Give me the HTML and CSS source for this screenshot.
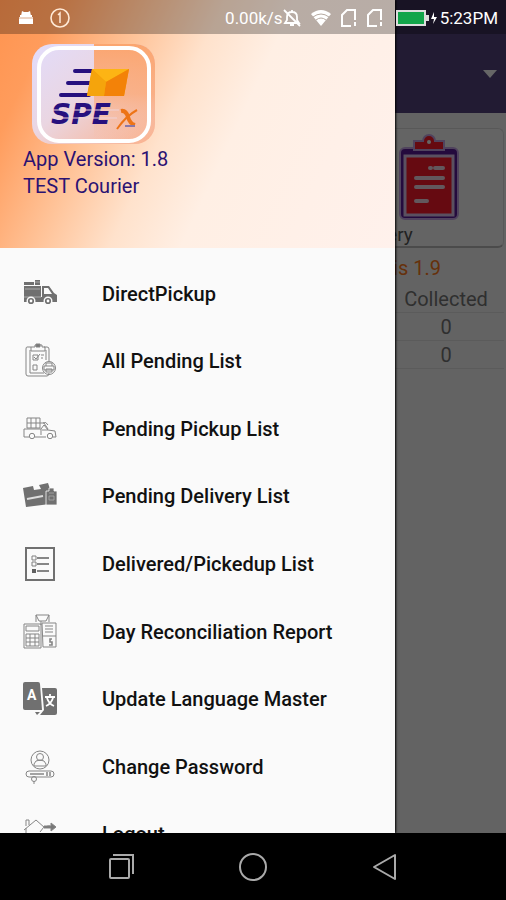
FILE: index.html
```html
<!DOCTYPE html>
<html lang="en">
<head>
  <meta charset="UTF-8" />
  <meta name="viewport" content="width=device-width, initial-scale=1.0" />
  <title>SPEx Courier</title>
  <link rel="stylesheet" href="styles.css">
</head>
<body>
  <div class="screen">
    <!-- Dashboard -->
    <main class="dashboard">
      <header class="toolbar">
        <button class="toolbar-menu" aria-label="More">
          <svg width="14" height="8" viewBox="0 0 14 8"><path d="M0 0h14L7 8z" fill="#fff"/></svg>
        </button>
      </header>
      <section class="cards">
        <div class="card"></div>
        <div class="card">
          <svg class="card-icon" width="64" height="88" viewBox="0 0 64 88">
            <rect x="3" y="15" width="58" height="71" rx="5" fill="#5a1a9a" stroke="#c9a8e8" stroke-width="2"/>
            <rect x="8" y="23" width="48" height="59" fill="#ff1a2b" stroke="#e0c8f0" stroke-width="3"/>
            <path d="M17 8h9a6 6 0 0 1 12 0h9v9H17z" fill="#ff1a2b" stroke="#c9a8e8" stroke-width="2"/>
            <circle cx="32" cy="9" r="2" fill="#fff"/>
            <path d="M33 35h1M38 35h8M19 45h27M19 54h27M19 68h11" stroke="#f4dce8" stroke-width="4" stroke-linecap="round"/>
          </svg>
          <p>Delivery</p>
        </div>
      </section>
      <p class="notice">is 1.9</p>
      <table class="summary">
        <thead>
          <tr><td></td><td></td><td></td><th>Collected</th></tr>
        </thead>
        <tbody>
          <tr><td></td><td></td><td></td><td>0</td></tr>
          <tr><td></td><td></td><td></td><td>0</td></tr>
        </tbody>
      </table>
    </main>

    <div class="scrim"></div>

    <!-- Navigation drawer -->
    <aside class="drawer">
      <div class="drawer-header">
        <svg class="logo" width="126" height="102" viewBox="0 0 126 102">
          <defs>
            <linearGradient id="box" x1="0" y1="0" x2="1" y2="1">
              <stop offset="0" stop-color="#e2dcfb"/>
              <stop offset=".45" stop-color="#ead6e2"/>
              <stop offset="1" stop-color="#fbb08a"/>
            </linearGradient>
            <linearGradient id="boxRight" x1="0" y1="0" x2="0" y2="1">
              <stop offset="0" stop-color="#fba56f"/>
              <stop offset=".5" stop-color="#fbab7b" stop-opacity=".8"/>
              <stop offset="1" stop-color="#f7c3ae" stop-opacity="0"/>
            </linearGradient>
          </defs>
          <rect x="1" y="1" width="123" height="100" rx="20" fill="url(#box)"/>
          <path d="M63 1h41a20 20 0 0 1 20 20v60a20 20 0 0 1-20 20H63z" fill="url(#boxRight)"/>
          <rect x="8" y="5" width="110" height="93" rx="20" fill="none" stroke="#fff" stroke-width="4"/>
          <path d="M44 28h18M37 40h22M30 52h28" stroke="#26107e" stroke-width="4" stroke-linecap="round"/>
          <path d="M61 26h37l-5 27H56z" fill="#f99b05"/>
          <path d="M61 26h37L75 39z" fill="#fdb414"/>
          <path d="M98 26l-5 27H73l2-14z" fill="#f38208"/>
          <path d="M61 26l14 13-2 14H56z" fill="#f5a40c"/>
          <text class="logo-name" x="20" y="81">SPE</text>
          <path d="M22 67h66M20 75h66" stroke="#efd2d6" stroke-width="1"/>
          <path d="M90 68q5-1 7 6t7 8" fill="none" stroke="#ed7417" stroke-width="4"/>
          <path d="M106 67Q95 73 86 86" fill="none" stroke="#ed7417" stroke-width="2"/>
          <path d="M94 83h10" stroke="#8878a8" stroke-width="2"/>
        </svg>
        <p>App Version: 1.8</p>
        <p>TEST Courier</p>
      </div>

      <nav class="menu">
        <a href="#">
          <svg class="icon" viewBox="0 0 36 36">
            <path d="M2 6h10v3H2zM13 4h5v5h-5zM2 10h17v13H2zM20 10h7l5 7 3 2v7H2v-5h18z" fill="#707070"/>
            <path d="M22 12h4l4 6h-8z" fill="#fafafa"/>
            <path d="M3 13h15M2 21h17M13 6h5" stroke="#aaa"/>
            <g fill="#707070" stroke="#fafafa" stroke-width="1.4">
              <circle cx="9" cy="25" r="3.8"/><circle cx="26" cy="25" r="3.8"/>
            </g>
            <circle cx="9" cy="25" r="1.4" fill="#fff"/><circle cx="26" cy="25" r="1.4" fill="#fff"/>
          </svg>
          DirectPickup
        </a>
        <a href="#">
          <svg class="icon line" viewBox="0 0 36 36">
            <path d="M9 4H5q-1 0-1 2v25q0 2 2 2h19q2 0 2-3M27 18V6q0-2-2-2h-3M8 7v23h14M24 7v10M9 4h4V2h7v2h3v4H9z"/>
            <path d="M11 12h5v5h-5zM12 14l2 2 4-5M19 12h3M19 15h2M11 22h4v5h-4z"/>
            <circle cx="27" cy="25" r="6.5"/>
            <path d="M24 23v-3h6v3M22 23h10v4H22zM24 26h6v3h-6z"/>
            <path d="M14 1h4v3h-4z" fill="#777"/>
          </svg>
          All Pending List
        </a>
        <a href="#">
          <svg class="icon line" viewBox="0 0 36 36">
            <path d="M5 7h13v10H5zM5 12h13M9 7v10M14 7v10M18 12h4l4 6M21 12q3-2 5 2"/>
            <path d="M2 18h17v6M19 18l3-4 4 5 7 1 1 6h-3M24 26H13M7 26H2v-8M20 19h6"/>
            <circle cx="10" cy="25" r="2.7"/><circle cx="28" cy="25" r="2.7"/>
          </svg>
          Pending Pickup List
        </a>
        <a href="#">
          <svg class="icon" viewBox="0 0 36 36">
            <path d="M1 10l10-2 1 4 7-1-2-4 9-2 2 6v15L4 29z" fill="#707070"/>
            <path d="M5 21l16-3" stroke="#ddd" stroke-width="2"/>
            <path d="M24 13h3v-3h5v3h3v14H24z" fill="#707070" stroke="#fafafa" stroke-width=".8"/>
            <path d="M27 15h5M27 18h5v4h-5z" fill="none" stroke="#aaa" stroke-width=".8"/>
          </svg>
          Pending Delivery List
        </a>
        <a href="#">
          <svg class="icon" viewBox="0 0 36 36">
            <path d="M4 2h28v32H4z" fill="none" stroke="#707070" stroke-width="2"/>
            <path d="M15 12h12M15 18h12M15 25h12" stroke="#606060" stroke-width="1.7"/>
            <path d="M10 10h4v4h-4zM10 16h4v4h-4z" fill="none" stroke="#808080"/>
            <path d="M10 23h4v4h-4z" fill="#606060"/>
          </svg>
          Delivered/Pickedup List
        </a>
        <a href="#">
          <svg class="icon line" viewBox="0 0 36 36">
            <path d="M14 8V1h13v7M14 1l3 6h7l3-6M19 7v4"/>
            <path d="M2 10h17v24H2zM4 12h13v5H4zM4 20h13v12H4zM4 24h13M4 28h13M8 20v12M13 20v12"/>
            <path d="M20 9h14v24H21zM23 12h8M23 15h8M23 18h8M21 22h13"/>
            <path d="M30 25h-2v3h2v3h-3" stroke-width="1.6"/>
          </svg>
          Day Reconciliation Report
        </a>
        <a href="#">
          <svg class="icon" viewBox="0 0 36 36">
            <path d="M3 1h13q2 0 2 2l2 26H3q-2 0-2-2V3q0-2 2-2zM13 31h5l-3 3zM20 7h13q2 0 2 2v23q0 2-2 2H18l4-5z" fill="#707070"/>
            <text class="icon-letter" x="5" y="19">A</text>
            <path d="M23 16h10M28 13v3M31 17q-2 6-7 8M25 17q2 6 7 8" fill="none" stroke="#fff" stroke-width="1.8"/>
          </svg>
          Update Language Master
        </a>
        <a href="#">
          <svg class="icon line" viewBox="0 0 36 36">
            <circle cx="18" cy="11" r="9"/>
            <circle cx="18" cy="8" r="3.5"/>
            <path d="M12 17v-2q1-4 6-4t6 4v2z"/>
            <rect x="4" y="22" width="28" height="6" rx="3"/>
            <path d="M8 25h14M25 23v4M28 23v4" stroke-width="1.5"/>
            <circle cx="12" cy="30" r="2.5"/><path d="M12 32v3"/>
          </svg>
          Change Password
        </a>
        <a href="#">
          <svg class="icon line" viewBox="0 0 36 36">
            <path d="M2 14L14 4l9 8M4 12v20h18v-5M4 10V4h3v5M18 16q3-6 8-6h2"/>
            <path d="M22 10h7V7l5 4-5 4v-3h-7z" fill="#777"/>
          </svg>
          Logout
        </a>
      </nav>
    </aside>

    <!-- Status bar -->
    <div class="status">
      <div class="status-left">
        <svg width="14" height="14" viewBox="0 0 14 14"><path d="M3 0l2 1h4l2-1 1 5H2zM1 4h12v2h1v7H0V6h1z" fill="#fff"/><path d="M0 7h14" stroke="#d9a888"/></svg>
        <svg width="20" height="20" viewBox="0 0 20 20"><circle cx="10" cy="10" r="9" fill="none" stroke="#ffe9d6" stroke-width="1.6"/><path d="M8 7l2-2v10" fill="none" stroke="#ffe9d6" stroke-width="1.5"/></svg>
      </div>
      <div class="status-right">
        <span>0.00k/s</span>
        <svg width="18" height="18" viewBox="0 0 18 18" fill="none" stroke="#fff" stroke-width="1.8"><path d="M2 14h14l-2-3V8q0-5-5-5T4 8v3zM7 16h4M9 1v2M1 1l16 16"/></svg>
        <svg class="wifi" width="20" height="16" viewBox="0 0 20 16"><path d="M0 4q10-8 20 0L10 16z" fill="#fff"/><path d="M2 7q8-6 16 0M5 10q5-4 10 0" fill="none" stroke="#b7aaa1"/></svg>
        <svg class="sim" width="16" height="18" viewBox="0 0 16 18"><path d="M14 11V1H6L1 6v11h9M14 13v4" fill="none" stroke="#fff" stroke-width="2"/></svg>
        <svg class="sim" width="16" height="18" viewBox="0 0 16 18"><path d="M14 11V1H6L1 6v11h9M14 13v4" fill="none" stroke="#fff" stroke-width="2"/></svg>
        <svg class="battery" width="42" height="16" viewBox="0 0 42 16"><rect x="1" y="1" width="28" height="14" fill="#12a54a" stroke="#ddd" stroke-width="2"/><path d="M30 5h3v6h-3z" fill="#ddd"/><path d="M38 2l-3 7h3l-1 5 4-7h-3z" fill="#fff"/></svg>
        <span>5:23PM</span>
      </div>
    </div>
  </div>

  <!-- System buttons -->
  <footer class="system-nav">
    <button aria-label="Recent apps">
      <svg width="28" height="28" viewBox="0 0 28 28"><rect x="3" y="6" width="19" height="19" rx="1"/><path d="M6 2h20v19"/></svg>
    </button>
    <button aria-label="Home">
      <svg width="28" height="28" viewBox="0 0 28 28"><circle cx="14" cy="14" r="13"/></svg>
    </button>
    <button aria-label="Back">
      <svg width="28" height="28" viewBox="0 0 28 28"><path d="M24 2v24L3 14z" stroke-linejoin="round"/></svg>
    </button>
  </footer>
</body>
</html>
```

FILE: styles.css
```css
* {
  box-sizing: border-box;
}

body {
  font-family: Roboto, sans-serif;
  margin: 0;
  height: 100vh;
  display: flex;
  flex-direction: column;
  background: #000;
}

p {
  margin: 0;
}

button {
  background: none;
  border: none;
  padding: 0;
  cursor: pointer;
}

svg {
  display: block;
  flex-shrink: 0;
}

.screen {
  flex: 1;
  min-height: 0;
  position: relative;
  overflow: hidden;
}

/* Dashboard */
.dashboard {
  height: 100%;
  background: #f7f7f7;
}

.toolbar {
  display: flex;
  justify-content: flex-end;
  align-items: center;
  height: 113px;
  padding: 34px 9px 0 0;
  background: #55457f;
}

.cards {
  display: grid;
  grid-template-columns: 1fr 1fr;
  gap: 4px;
  padding: 15px 2px 0;
}

.card {
  height: 120px;
  border: 1px solid #ddd;
  border-bottom: 2px solid #bbb;
  border-radius: 6px;
  background: #fafafa;
  text-align: center;
  color: #555;
  font-size: 19px;
  line-height: 24px;
}

.card-icon {
  margin: 4px 42px 2px auto;
}

.notice {
  padding: 8px 65px 0 0;
  text-align: right;
  font-size: 20px;
  line-height: 24px;
  color: #ff7a1a;
}

.summary {
  width: 100%;
  margin-top: 5px;
  padding-right: 2px;
  table-layout: fixed;
  border-spacing: 0;
  text-align: center;
  font-size: 20px;
  color: #777;
}

.summary th,
.summary td {
  height: 28px;
  padding: 0;
  font-weight: normal;
  border-bottom: 1px solid #e4e4e4;
}

.summary th:last-child,
.summary td:last-child {
  width: 116px;
}

.scrim {
  position: absolute;
  inset: 0;
  background: rgba(0, 0, 0, 0.6);
}

/* Navigation drawer */
.drawer {
  position: absolute;
  top: 0;
  bottom: 0;
  left: 0;
  width: 78%;
  overflow: hidden;
  background: #fafafa;
  box-shadow: 1px 0 2px #000;
}

.drawer-header {
  height: 248px;
  padding: 43px 23px 0;
  background: linear-gradient(115deg, #ff9450 0%, #ff9c5c 12%, #ffc49a 30%, #ffe2cc 44%, #ffefe4 58%, #fff1ec 100%);
  color: #2b1272;
  font-size: 20px;
  line-height: 27px;
}

.logo {
  margin: 0 0 1px 8px;
}

.logo-name {
  font: italic bold 28px "DejaVu Sans", sans-serif;
  fill: #26107e;
}

.menu {
  display: grid;
  grid-template-rows: repeat(9, 1fr);
  height: 608px;
  margin-top: 12px;
}

.menu a {
  display: flex;
  align-items: center;
  gap: 44px;
  padding: 0 22px;
  color: #111;
  font-size: 20px;
  font-weight: 500;
  text-decoration: none;
  white-space: nowrap;
}

.icon {
  width: 36px;
  height: 36px;
}

.line {
  fill: none;
  stroke: #858585;
  stroke-width: 1;
}

.icon-letter {
  font: bold 14px Roboto, sans-serif;
  fill: #fff;
}

/* Status bar */
.status {
  position: absolute;
  top: 0;
  left: 0;
  right: 0;
  display: flex;
  justify-content: space-between;
  align-items: center;
  height: 34px;
  padding: 2px 8px 0 19px;
  background: rgba(0, 0, 0, 0.28);
  color: #fff;
  font-size: 17px;
}

.status-left,
.status-right {
  display: flex;
  align-items: center;
}

.status-left {
  gap: 17px;
}

.wifi,
.sim {
  margin-left: 10px;
}

.battery {
  margin: 0 2px 0 13px;
}

/* System buttons */
.system-nav {
  display: flex;
  justify-content: center;
  align-items: center;
  gap: 104px;
  height: 67px;
  background: #000;
}

.system-nav svg {
  fill: none;
  stroke: #aaa;
  stroke-width: 2;
}
```
